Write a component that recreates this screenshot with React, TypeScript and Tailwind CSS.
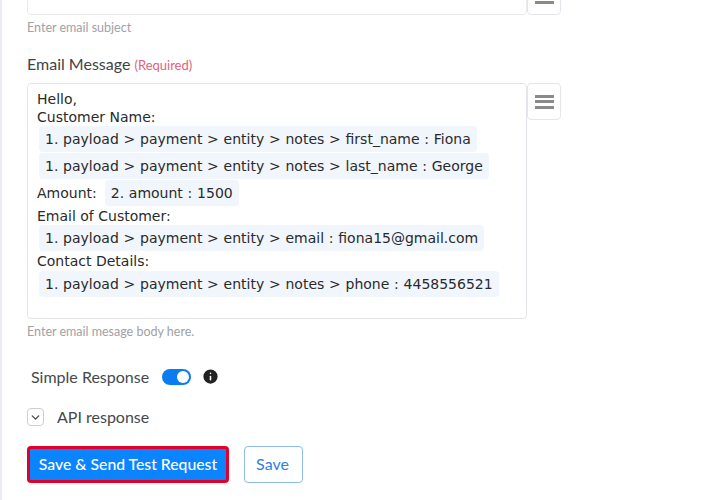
import { ChevronDown, Info } from 'lucide-react';

const label = "font-['Lato',sans-serif]";
const body = "font-['DejaVu_Sans',sans-serif]";

function Chip({ children }: { children: React.ReactNode }) {
  return (
    <span className="inline-flex h-[26px] items-center rounded bg-[#f1f6fd] px-[6px] whitespace-pre [word-spacing:0.3px]">
      {children}
    </span>
  );
}

function MenuButton({ className = '' }: { className?: string }) {
  return (
    <button className={`flex w-[34px] flex-col items-center justify-center gap-[2.5px] rounded border border-[#e6e4ea] bg-white ${className}`}>
      <span className="h-[3px] w-[19px] bg-[#8a8a8a]" />
      <span className="h-[3px] w-[19px] bg-[#8a8a8a]" />
      <span className="h-[3px] w-[19px] bg-[#8a8a8a]" />
    </button>
  );
}

export default function App() {
  return (
    <div className={`h-[500px] w-[726px] overflow-hidden border-l-2 border-[#ebebf5] bg-white ${label}`}>
      <div className="-mt-[22px] pl-[25px]">
        <div className="flex items-start">
          <div className="h-[37px] w-[500px] rounded border border-[#ebe9ee]" />
          <MenuButton className="h-[37px]" />
        </div>
        <p className="mt-[4px] text-[12.5px] leading-[18px] text-[#a1a1a6]">Enter email subject</p>

        <p className="mt-[16px] text-[16px] leading-[22px] text-[#3f4347]">
          Email Message <span className="text-[13px] text-[#e0637a]">(Required)</span>
        </p>

        <div className="mt-[7px] flex items-start">
          <div className={`h-[236px] w-[500px] rounded border border-[#e6e4ea] pl-[9px] pt-[6px] text-[14px] text-[#2a2a2a] ${body}`}>
            <div className="leading-[18px]">Hello,</div>
            <div className="leading-[18px]">Customer Name:</div>
            <div className="flex flex-col items-start gap-[1px] pl-[2px]">
              <Chip>1. payload &gt; payment &gt; entity &gt; notes &gt; first_name : Fiona</Chip>
              <Chip>1. payload &gt; payment &gt; entity &gt; notes &gt; last_name : George</Chip>
            </div>
            <div className="mt-[1px] flex items-center gap-[8px]">
              Amount: <Chip>2. amount : 1500</Chip>
            </div>
            <div className="mt-[1px] leading-[18px]">Email of Customer:</div>
            <div className="pl-[2px]">
              <Chip>1. payload &gt; payment &gt; entity &gt; email : fiona15@gmail.com</Chip>
            </div>
            <div className="leading-[20px]">Contact Details:</div>
            <div className="pl-[2px]">
              <Chip>1. payload &gt; payment &gt; entity &gt; notes &gt; phone : 4458556521</Chip>
            </div>
          </div>
          <MenuButton className="h-[37px]" />
        </div>
        <p className="mt-[4px] text-[12.5px] leading-[18px] text-[#a1a1a6]">Enter email mesage body here.</p>

        <div className="mt-[24px] flex items-center pl-[4px] text-[16px] text-[#45494d]">
          <span>Simple Response</span>
          <span className="ml-[13px] flex h-[16px] w-[29px] items-center justify-end rounded-full bg-[#0a7cf0] pr-[2px]">
            <span className="h-[12px] w-[12px] rounded-full bg-white" />
          </span>
          <Info size={19} fill="#222" stroke="#fff" className="mb-[2px] ml-[10px]" />
        </div>

        <div className="mt-[16px] flex items-center text-[16px] text-[#45494d]">
          <span className="flex h-[18px] w-[17px] items-center justify-center rounded border border-[#cfcfcf]">
            <ChevronDown size={13} strokeWidth={2.5} />
          </span>
          <span className="ml-[13px]">API response</span>
        </div>

        <div className="mt-[17px] flex items-center gap-[15px] text-[16px]">
          <button className="h-[37px] w-[202px] rounded border-[3px] border-[#e0002a] bg-[#0a84ff] pb-[2px] text-[15.75px] font-medium text-white">
            Save &amp; Send Test Request
          </button>
          <button className="h-[37px] w-[59px] rounded border border-[#8fbdea] bg-white pb-[2px] pr-[2px] text-[#2f80e0]">Save</button>
        </div>
      </div>
    </div>
  );
}
